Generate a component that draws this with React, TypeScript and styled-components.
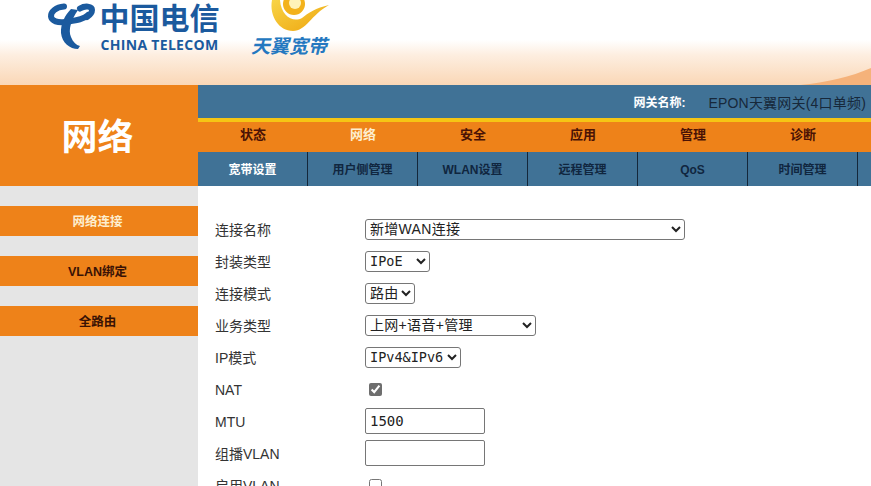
import styled, { createGlobalStyle } from "styled-components";

const topTabs = ["状态", "网络", "安全", "应用", "管理", "诊断"];
const subTabs = ["宽带设置", "用户侧管理", "WLAN设置", "远程管理", "QoS", "时间管理"];
const sideItems = ["网络连接", "VLAN绑定", "全路由"];

const App = () => {
  return (
    <Page>
      <GlobalStyle />
      <Header>
        <LogoMark viewBox="0 0 48 48">
          <g fill="none" stroke="#1b5a9e" strokeLinecap="round" strokeWidth="6">
            <path d="M17 4.500C9 5 3.500 10 4 14.500C4.500 19 11 21 18 20C28 18.500 36 18 41 13" />
            <path d="M33 6.500C38 3.500 45 4 45 8C45 11 43 13 40 15" />
          </g>
          <path
            d="M24 7L31 8C24 18 21 28 24 35C26 40 29 43 33 44L31 47C23 47 15 41 14 31C13.500 22 18 13 24 7Z"
            fill="#1b5a9e"
          />
        </LogoMark>
        <BrandText>
          <BrandCn>中国电信</BrandCn>
          <BrandEn>CHINA TELECOM</BrandEn>
        </BrandText>
        <Broadband>
          <SunMark viewBox="0 0 62 32">
            <defs>
              <linearGradient id="gold" x1="0" y1="0" x2="1" y2="1">
                <stop offset="0" stopColor="#f8d447" />
                <stop offset="1" stopColor="#eea50e" />
              </linearGradient>
            </defs>
            <path d="M3 0C0 16 10 31 24 31C37 31 42 15 60 5C47 8 39 13 33 18C24 23 12 16 11 0Z" fill="url(#gold)" />
            <circle cx="25" cy="4" r="11" fill="#f3b21c" />
            <circle cx="26" cy="3" r="6" fill="#fff3b8" />
          </SunMark>
          <BroadbandText>天翼宽带</BroadbandText>
        </Broadband>
        <Swoosh viewBox="0 0 80 20" preserveAspectRatio="none">
          <path d="M0 20C30 17 58 10 80 0V20Z" fill="#f5b27a" />
        </Swoosh>
      </Header>
      <Main>
        <Side>
          <SideTitle>网络</SideTitle>
          <SideMenu>
            {sideItems.map((item, i) => (
              <SideItem key={item} $active={i === 0}>{item}</SideItem>
            ))}
          </SideMenu>
        </Side>
        <Content>
          <InfoBar>
            <InfoLabel>网关名称:</InfoLabel>
            <InfoValue>EPON天翼网关(4口单频)</InfoValue>
          </InfoBar>
          <TopNav>
            {topTabs.map((tab, i) => (
              <TopTab key={tab} $active={i === 1}>{tab}</TopTab>
            ))}
          </TopNav>
          <SubNav>
            {subTabs.map((tab, i) => (
              <SubTab key={tab} $active={i === 0}>{tab}</SubTab>
            ))}
          </SubNav>
          <Form>
            <Row>
              <Label>连接名称</Label>
              <Select $width={320} defaultValue="新增WAN连接">
                <option>新增WAN连接</option>
              </Select>
            </Row>
            <Row>
              <Label>封装类型</Label>
              <Select $width={65} $mono defaultValue="IPoE">
                <option>IPoE</option>
                <option>PPPoE</option>
              </Select>
            </Row>
            <Row>
              <Label>连接模式</Label>
              <Select $width={50} defaultValue="路由">
                <option>路由</option>
                <option>桥接</option>
              </Select>
            </Row>
            <Row>
              <Label>业务类型</Label>
              <Select $width={171} defaultValue="上网+语音+管理">
                <option>上网+语音+管理</option>
              </Select>
            </Row>
            <Row>
              <Label>IP模式</Label>
              <Select $width={96} $mono defaultValue="IPv4&IPv6">
                <option>IPv4&IPv6</option>
              </Select>
            </Row>
            <Row>
              <Label $latin>NAT</Label>
              <Check type="checkbox" defaultChecked />
            </Row>
            <Row>
              <Label $latin>MTU</Label>
              <TextInput defaultValue="1500" />
            </Row>
            <Row>
              <Label>组播VLAN</Label>
              <TextInput />
            </Row>
            <Row>
              <Label>启用VLAN</Label>
              <Check type="checkbox" />
            </Row>
          </Form>
        </Content>
      </Main>
    </Page>
  );
};

const cjk = `"Liberation Sans", "Noto Sans CJK SC", sans-serif`;
const mono = `"DejaVu Sans Mono", "Noto Sans CJK SC", monospace`;

const GlobalStyle = createGlobalStyle`
  html, body {
    margin: 0;
    height: 100%;
    overflow: hidden;
    background: #fff;
    font-family: ${cjk};
  }
`;

const Page = styled.div`
  width: 871px;
  height: 486px;
  overflow: hidden;
`;

const Header = styled.header`
  position: relative;
  height: 85px;
  padding-left: 47px;
  display: flex;
  align-items: flex-start;
  background: linear-gradient(#fff 0, #fff 40px, #fdeee0 55px, #fad7b6 85px);
  box-sizing: border-box;
`;

const LogoMark = styled.svg`
  width: 48px;
  height: 48px;
  margin-top: 2px;
`;

const BrandText = styled.div`
  margin-left: 5px;
  width: 119px;
  display: flex;
  flex-direction: column;
  align-items: center;
  color: #1b5a9e;
`;

const BrandCn = styled.div`
  font-size: 30px;
  line-height: 38px;
  font-weight: 700;
  white-space: nowrap;
`;

const BrandEn = styled.div`
  font-size: 14px;
  line-height: 14px;
  letter-spacing: 0.3px;
  font-weight: 700;
  white-space: nowrap;
  font-family: "Open Sans", sans-serif;
`;

const Broadband = styled.div`
  margin-left: 32px;
  width: 80px;
  display: flex;
  flex-direction: column;
  align-items: flex-end;
`;

const SunMark = styled.svg`
  width: 62px;
  height: 32px;
`;

const BroadbandText = styled.div`
  align-self: flex-start;
  margin-top: 5px;
  font-size: 19px;
  line-height: 20px;
  font-style: italic;
  font-weight: 700;
  color: #2478c0;
  white-space: nowrap;
`;

const Swoosh = styled.svg`
  position: absolute;
  right: 0;
  bottom: 0;
  width: 71px;
  height: 17px;
`;

const Main = styled.div`
  display: flex;
  height: 401px;
`;

const Side = styled.aside`
  width: 198px;
  flex: none;
  background: #e5e5e5;
`;

const SideTitle = styled.div`
  height: 101px;
  padding-right: 3px;
  box-sizing: border-box;
  background: #ee8219;
  color: #fff;
  font-size: 36px;
  font-weight: 700;
  line-height: 106px;
  text-align: center;
`;

const SideMenu = styled.nav`
  display: flex;
  flex-direction: column;
  gap: 20px;
  padding-top: 20px;
`;

const SideItem = styled.div<{ $active?: boolean }>`
  height: 30px;
  padding-right: 3px;
  line-height: 32px;
  background: #ee8219;
  text-align: center;
  font-size: 12.5px;
  font-weight: 700;
  color: ${(p) => (p.$active ? "#fdeecf" : "#3a1205")};
`;

const Content = styled.div`
  flex: 1;
  min-width: 0;
`;

const InfoBar = styled.div`
  height: 33px;
  background: #407296;
  border-bottom: 4px solid #f6c514;
  display: flex;
  align-items: center;
  justify-content: flex-end;
  padding-right: 5px;
`;

const InfoLabel = styled.span`
  font-size: 12px;
  font-weight: 700;
  color: #fff;
  margin-right: 23px;
`;

const InfoValue = styled.span`
  font-size: 14px;
  letter-spacing: 0.2px;
  color: #17283a;
  white-space: nowrap;
`;

const TopNav = styled.div`
  height: 30px;
  background: #ee8219;
  display: flex;
`;

const TopTab = styled.div<{ $active?: boolean }>`
  width: 110px;
  text-align: center;
  line-height: 26px;
  font-size: 13px;
  font-weight: 700;
  color: ${(p) => (p.$active ? "#fdeecf" : "#4a1205")};
`;

const SubNav = styled.div`
  height: 34px;
  background: #407296;
  display: flex;
`;

const SubTab = styled.div<{ $active?: boolean }>`
  width: 110px;
  box-sizing: border-box;
  border-right: 1px solid #14273a;
  text-align: center;
  line-height: 37px;
  font-size: 12px;
  font-weight: 700;
  color: ${(p) => (p.$active ? "#fff" : "#10263f")};
`;

const Form = styled.form`
  padding: 27px 0 0 17px;
`;

const Row = styled.div`
  height: 32px;
  display: flex;
  align-items: center;
`;

const Label = styled.label<{ $latin?: boolean }>`
  width: 150px;
  flex: none;
  padding-top: ${(p) => (p.$latin ? "2px" : "0")};
  font-size: 14px;
  color: #333;
  white-space: nowrap;
`;

const Select = styled.select<{ $width: number; $mono?: boolean }>`
  width: ${(p) => p.$width}px;
  height: 21px;
  box-sizing: border-box;
  font-family: ${(p) => (p.$mono ? mono : cjk)};
  font-size: ${(p) => (p.$mono ? "13.5px" : "14px")};
  letter-spacing: ${(p) => (p.$mono ? "0" : "0.3px")};
  color: #222;
  background: #fff;
  border: 1px solid #767676;
  border-radius: 3px;
`;

const Check = styled.input`
  width: 13px;
  height: 13px;
  margin: 0 0 0 4px;
  accent-color: #6e6e6e;
`;

const TextInput = styled.input`
  width: 120px;
  height: 26px;
  box-sizing: border-box;
  padding: 1px 4px;
  font-family: ${mono};
  font-size: 14px;
  color: #222;
  border: 1px solid #767676;
  border-radius: 2px;
`;

export default App;
